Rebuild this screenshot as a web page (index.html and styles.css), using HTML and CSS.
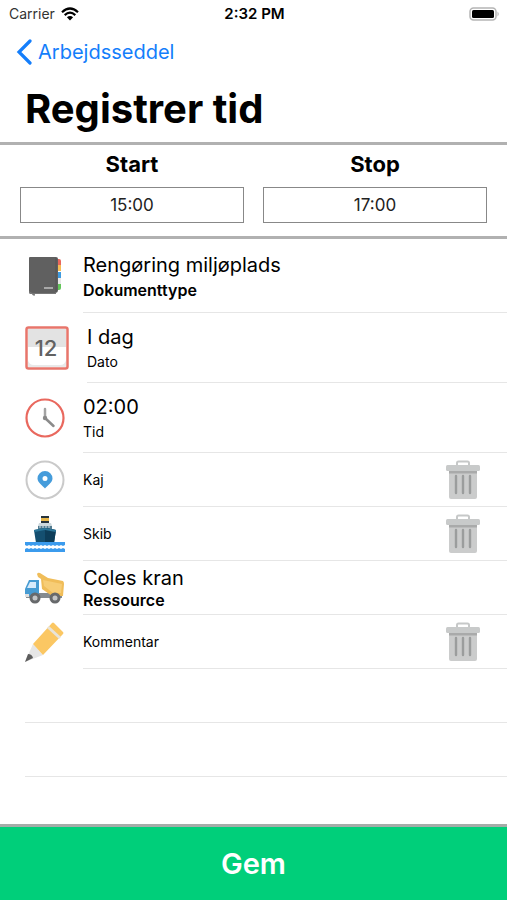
FILE: index.html
```html
<!DOCTYPE html>
<html lang="da">
<head>
<meta charset="utf-8">
<meta name="viewport" content="width=device-width, initial-scale=1">
<title>Registrer tid</title>
<link rel="stylesheet" href="styles.css">
</head>
<body>
<svg class="defs" aria-hidden="true">
  <symbol id="trash" viewBox="0 0 34 40">
    <path d="M11 5V3q0-1.500 1.500-1.500h9Q23 1.500 23 3v2" fill="none" stroke="#c6c8c8" stroke-width="2"/>
    <path d="M3 10h28v27q0 2-2 2H5q-2 0-2-2z" fill="#cbcccc"/>
    <path d="M3 10h28v3.500H3z" fill="#a9aaaa"/>
    <rect x="0" y="5" width="34" height="6" rx="1.500" fill="#c8caca"/>
    <path d="M10 16v17M17 16v17M24 16v17" stroke="#9b9d9d" stroke-width="2.400" stroke-linecap="round"/>
  </symbol>
</svg>

<header class="top">
  <div class="status">
    <span class="carrier">Carrier
      <svg class="wifi" viewBox="0 0 18 14" aria-hidden="true">
        <path d="M1 5.200Q9-2.200 17 5.200M3.700 8.100Q9 3.300 14.300 8.100" fill="none" stroke="#000" stroke-width="2.200"/>
        <path d="M5.900 10.300Q9 7.600 12.100 10.300L9 13.500z"/>
      </svg>
    </span>
    <span class="clock">2:32 PM</span>
    <svg class="battery" viewBox="0 0 31 14" aria-hidden="true">
      <rect x="1" y="1" width="26" height="12" rx="3.500" fill="#fff" stroke="#b5b5b5" stroke-width="1.500"/>
      <rect x="3" y="3" width="22" height="8" rx="1.500"/>
      <path d="M28.500 4.500q2.500 2.500 0 5z" fill="#b5b5b5"/>
    </svg>
  </div>
  <nav>
    <a class="back" href="#">
      <svg viewBox="0 0 16 26" aria-hidden="true"><path d="M14 2L3 13l11 11" fill="none" stroke="#147efb" stroke-width="3.200" stroke-linecap="round"/></svg>
      Arbejdsseddel
    </a>
  </nav>
  <h1>Registrer tid</h1>
</header>

<main>
  <section class="times">
    <label class="time">Start<input type="text" value="15:00"></label>
    <label class="time">Stop<input type="text" value="17:00"></label>
  </section>

  <ul class="rows">
    <li class="row first">
      <svg class="icon" viewBox="0 0 40 40" aria-hidden="true">
        <path d="M32 3h2q2 0 2 2v4h-4z" fill="#e8665c"/><path d="M32 9h4v6h-4z" fill="#f6bd55"/><path d="M32 16h4v6h-4z" fill="#3e9be0"/><path d="M32 22h4v6h-4z" fill="#e8e8e8"/><path d="M32 28h4v4q0 2-2 2h-2z" fill="#63c65a"/>
        <path d="M4 2q0-1 1-1h26q2 0 2 2v31q0 3-3 3H5q-1 0-1-1z" fill="#606060"/>
        <path d="M31 2v34" stroke="#525252" stroke-width="1"/>
        <path d="M4 35q2 2 4 2h23v1H10l-.5 2-2-1-.5-1H5q-1 0-1-2z" fill="#777"/>
        <rect x="19" y="31" width="9" height="2" fill="#a8a8a8"/>
      </svg>
      <div class="content"><div class="text"><span class="value">Rengøring miljøplads</span><strong class="name">Dokumenttype</strong></div></div>
    </li>
    <li class="row tall wide">
      <svg class="icon" viewBox="0 0 44 44" aria-hidden="true">
        <rect x="1.500" y="1.500" width="41" height="41" rx="2" fill="#fff" stroke="#e8756b" stroke-width="2.500"/>
        <path d="M3 3h38v18H3z" fill="#e3e3e3"/>
        <path d="M3 34q1 5 6 5h26q5 0 6-5v7H3z" fill="#e9e9e9"/>
        <text class="day" x="21" y="30">12</text>
      </svg>
      <div class="content"><div class="text"><span class="value">I dag</span><span class="name">Dato</span></div></div>
    </li>
    <li class="row tall">
      <svg class="icon" viewBox="0 0 40 40" aria-hidden="true">
        <circle cx="20" cy="20" r="18.500" fill="#fff" stroke="#e9685e" stroke-width="2.200"/>
        <path d="M20 11v9" stroke="#a3a3a3" stroke-width="2.500" stroke-linecap="round"/><path d="M20 20l8.500 8" stroke="#8b8b8b" stroke-width="2.500" stroke-linecap="round"/><circle cx="20" cy="20" r="2.200" fill="#888"/>
      </svg>
      <div class="content"><div class="text"><span class="value">02:00</span><span class="name">Tid</span></div></div>
    </li>
    <li class="row">
      <svg class="icon" viewBox="0 0 40 40" aria-hidden="true">
        <circle cx="20" cy="20" r="18.500" fill="#fff" stroke="#cacaca" stroke-width="2"/>
        <path fill-rule="evenodd" d="M20 28.500C18 26 12.500 22.500 12.500 18.500a7.500 7.500 0 0 1 15 0C27.500 22.500 22 26 20 28.500zM20 16a2.500 2.500 0 1 0 0 5 2.500 2.500 0 0 0 0-5z" fill="#459cdb"/>
      </svg>
      <div class="content"><div class="text"><span class="name">Kaj</span></div><button class="delete" type="button" aria-label="Slet kaj"><svg aria-hidden="true"><use href="#trash"/></svg></button></div>
    </li>
    <li class="row">
      <svg class="icon" viewBox="0 0 40 40" aria-hidden="true">
        <path d="M16 2h8v8h-8z" fill="#26323b"/><path d="M16 4h8v3h-8z" fill="#e8b84b"/>
        <path d="M14 9h12l1 3H13z" fill="#cdd8dd"/><path d="M13 12h14v5H13z" fill="#547c90"/><path d="M14 13h12" stroke="#d8e3e8" stroke-width="1" stroke-dasharray="2 1"/>
        <path d="M9 16l11-2 11 2-2 13H11z" fill="#144f70"/><path d="M20 14l11 2-2 13h-9z" fill="#0d3d59"/><path d="M9 16l11-2 11 2-.4 2L20 16 9.400 18z" fill="#2b7699"/>
        <path d="M0 28h40v3l-2 1-2-1-2 1-2-1-2 1-2-1-2 1-2-1-2 1-2-1-2 1-2-1-2 1-2-1-2 1-2-1-2 1-2-1-2 1-2-1z" fill="#3b9bed"/>
        <path d="M0 35l2-1 2 1 2-1 2 1 2-1 2 1 2-1 2 1 2-1 2 1 2-1 2 1 2-1 2 1 2-1 2 1 2-1 2 1 2-1 2 1v3H0z" fill="#3b9bed"/>
      </svg>
      <div class="content"><div class="text"><span class="name">Skib</span></div><button class="delete" type="button" aria-label="Slet skib"><svg aria-hidden="true"><use href="#trash"/></svg></button></div>
    </li>
    <li class="row pair">
      <svg class="icon" viewBox="0 0 40 40" aria-hidden="true">
        <path d="M1 25h36v5H1z" fill="#858b90"/>
        <path d="M12 6q1-2 3-1l8 5 15 3q1 1 1 3l-1 12H27l-10-7-1-10-3-2z" fill="#f0bd59"/><path d="M18 12l19 4-1 9h-8l-9-7z" fill="#f7cd76"/>
        <path d="M4 12h10v16H0v-7z" fill="#469bd2"/><path d="M5 14h6v6H2z" fill="#d7eafa"/>
        <path d="M0 26h4v3H0z" fill="#e0e0e0"/>
        <circle cx="10" cy="30" r="5.500" fill="#66696b"/><circle cx="10" cy="30" r="2.500" fill="#c3c5c6"/>
        <circle cx="30" cy="30" r="5.500" fill="#66696b"/><circle cx="30" cy="30" r="2.500" fill="#c3c5c6"/>
      </svg>
      <div class="content"><div class="text"><span class="value">Coles kran</span><strong class="name">Ressource</strong></div></div>
    </li>
    <li class="row">
      <svg class="icon" viewBox="0 0 40 40" aria-hidden="true">
        <path d="M0 40L8 22 18 33z" fill="#e6e6e6"/><path d="M0 40l3-8q4 0 5 4z" fill="#5d5d5d"/>
        <path d="M8 22L27 1q1-1 2 0l9 9q1 1 0 2L18 33z" fill="#fbc763"/>
        <path d="M22 6l12 11 2-2L24 4z" fill="#e8e3d8"/>
      </svg>
      <div class="content"><div class="text"><span class="name">Kommentar</span></div><button class="delete" type="button" aria-label="Slet kommentar"><svg aria-hidden="true"><use href="#trash"/></svg></button></div>
    </li>
    <li class="blank"></li>
    <li class="blank"></li>
  </ul>
</main>

<button class="save" type="button">Gem</button>
</body>
</html>
```

FILE: styles.css
```css
* {
  box-sizing: border-box;
}

body {
  margin: 0;
  min-height: 100vh;
  display: flex;
  flex-direction: column;
  background: #fff;
  color: #000;
  font-family: Inter, "Liberation Sans", sans-serif;
  font-size: 14px;
}

.defs {
  display: none;
}

.status {
  display: grid;
  grid-template-columns: 1fr auto 1fr;
  align-items: center;
  height: 27px;
  padding: 0 7px 0 9px;
}

.carrier {
  display: flex;
  align-items: center;
  gap: 6px;
  color: #333;
}

.wifi {
  width: 18px;
  height: 14px;
}

.clock {
  font-size: 15px;
  font-weight: 600;
}

.battery {
  width: 31px;
  height: 14px;
  justify-self: end;
}

.back {
  display: inline-flex;
  align-items: center;
  gap: 6px;
  height: 50px;
  padding-left: 16px;
  color: #147efb;
  font-size: 20px;
  text-decoration: none;
}

.back svg {
  width: 16px;
  height: 26px;
}

h1 {
  margin: 0;
  padding: 6px 25px 7px;
  font-size: 40px;
  line-height: 52px;
  font-weight: 700;
}

.times {
  display: grid;
  grid-template-columns: 1fr 1fr;
  gap: 19px;
  padding: 3px 20px 13px;
  border-top: 3px solid #b1b1b1;
  border-bottom: 3px solid #b1b1b1;
}

.time {
  display: flex;
  flex-direction: column;
  gap: 7px;
  font-size: 22px;
  line-height: 32px;
  font-weight: 700;
  text-align: center;
}

.time input {
  width: 100%;
  height: 36px;
  padding: 0;
  border: 1px solid #888;
  border-radius: 0;
  background: #fff;
  color: #222;
  font: 400 17px Inter, "Liberation Sans", sans-serif;
  text-align: center;
}

.rows {
  margin: 0;
  padding: 0;
  list-style: none;
}

.row {
  display: flex;
  align-items: center;
  gap: 18px;
  height: 54px;
  padding-left: 25px;
}

.row.first {
  height: 74px;
}

.row.tall {
  height: 70px;
}

.icon {
  flex: none;
  width: 40px;
  height: 40px;
}

.wide .icon {
  width: 44px;
  height: 44px;
}

.day {
  fill: #626262;
  font-size: 22px;
  font-weight: 500;
  text-anchor: middle;
}

.content {
  flex: 1;
  align-self: stretch;
  display: flex;
  align-items: center;
  justify-content: space-between;
  padding-right: 27px;
  border-bottom: 1px solid #e6e6e6;
}

.text {
  display: flex;
  flex-direction: column;
}

.value {
  font-size: 20px;
  line-height: 28px;
}

.name {
  font-size: 14px;
  line-height: 22px;
}

.pair .value {
  line-height: 24px;
}

.pair .name {
  line-height: 20px;
}

strong.name {
  font-size: 16px;
  font-weight: 600;
}

.delete {
  width: 34px;
  height: 40px;
  padding: 0;
  border: 0;
  background: none;
}

.delete svg {
  display: block;
  width: 34px;
  height: 40px;
}

.blank {
  height: 54px;
  margin-left: 25px;
  border-bottom: 1px solid #e6e6e6;
}

.save {
  width: 100%;
  height: 76px;
  margin-top: auto;
  border: 0;
  border-top: 3px solid #a5aca8;
  background: #00cf7a;
  color: #fff;
  font: 600 29px Inter, "Liberation Sans", sans-serif;
}
```
